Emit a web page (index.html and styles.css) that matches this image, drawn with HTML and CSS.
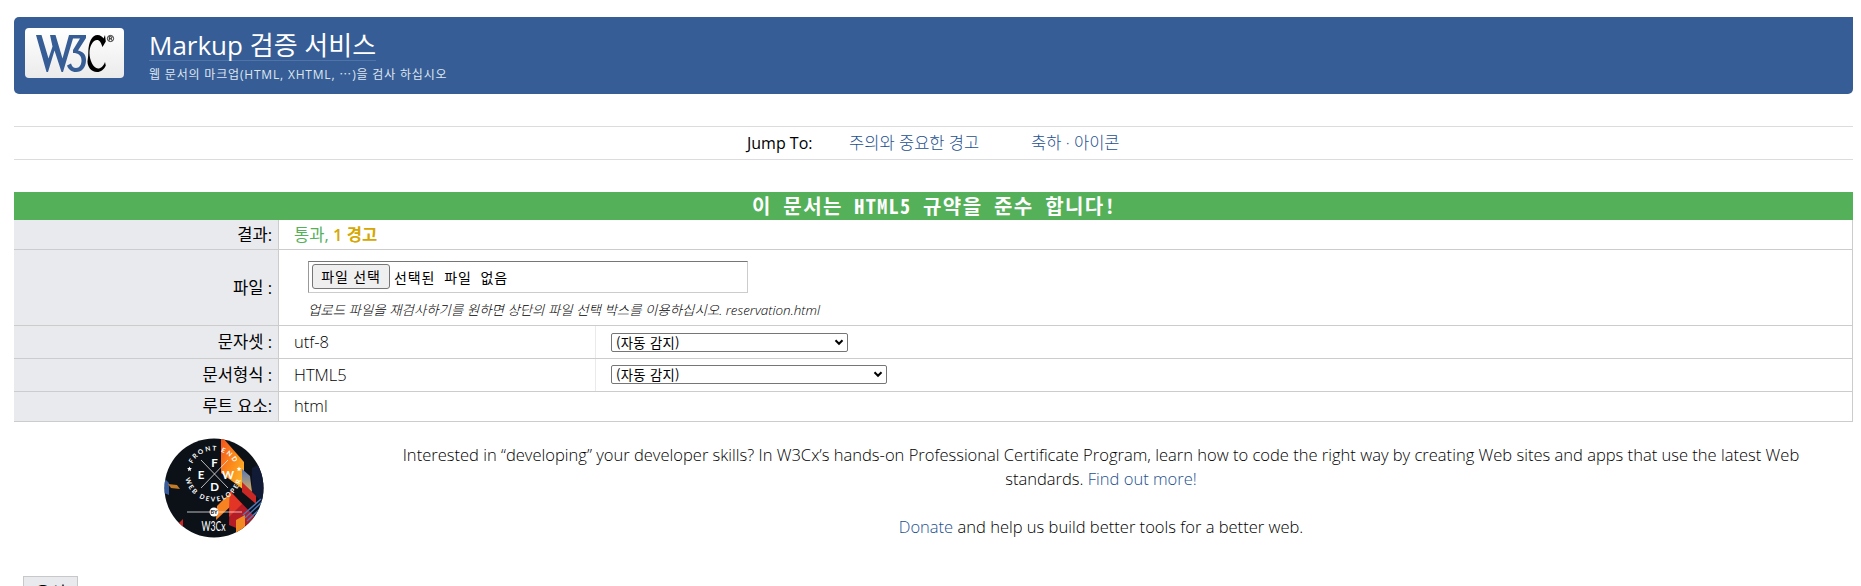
FILE: index.html
```html
<!DOCTYPE html>
<html lang="ko">
<head>
<meta charset="utf-8">
<title>Markup 검증 서비스</title>
<link rel="stylesheet" href="styles.css">
</head>
<body>
<header class="banner">
  <svg class="logo" viewBox="0 0 99 50" width="99" height="50">
    <defs><linearGradient id="plate" x1="0" y1="0" x2="0" y2="1"><stop offset="0" stop-color="#fff"/><stop offset="1" stop-color="#ebebeb"/></linearGradient></defs>
    <rect width="99" height="50" rx="4" fill="url(#plate)"/>
    <path fill="#365d95" d="M11 7h5.500l7 23.500 4-12L25 7h5.500l7 23.500L44 7h17v3l-8 12.500c5 1 8 4 8 9.500 0 7.500-4 12-10 12-4.500 0-7.500-2.500-9-6.500l4-2c1 3 2.500 4.500 5 4.500 3.500 0 5.500-3.500 5.500-7.500 0-5-3-7.500-8.500-7.500v-3l7-11.500H48L38 44h-1.500L29.500 22.500 23 44h-1.500z"/>
    <path d="M80 7l.8 6.500L77.500 19c-1.500-4.500-3-7-5.500-7-4 0-7.500 6-7.500 13s4 15.500 8.500 15.500c3 0 5.500-2.500 7-6.500l.8 3.500C79 41.500 76 44 72 44c-6 0-9.500-5.500-9.500-10.500 0 0 .8-5 .8-9.500C63.500 14 67 7 72.500 7c3 0 5 2 6 3.500z"/>
    <circle cx="85.500" cy="10.500" r="3.100" fill="none" stroke="#000" stroke-width=".8"/>
    <path d="M84.300 12.500V8.700h1.500a1 1 0 0 1 0 2h-1.500m1.500 0l1.100 1.800" fill="none" stroke="#000" stroke-width=".8"/>
  </svg>
  <div class="titles">
    <h1 class="title"><span class="title-text">Markup 검증 서비스</span></h1>
    <p class="tagline">웹 문서의 마크업(HTML, XHTML, <span class="dots">…</span>)을 검사 하십시오</p>
  </div>
</header>
<nav class="jump">
  <strong class="jump-label">Jump To:</strong>
  <a class="jump-a">주의와 중요한 경고</a>
  <a class="jump-b">축하 · 아이콘</a>
</nav>
<main>
  <h2 class="verdict"><span>이 문서는 HTML5 규약을 준수 합니다!</span></h2>
  <div class="results">
    <div class="row r-result"><div class="th">결과:</div><div class="td"><span class="pass">통과, <b class="warn">1 경고</b></span></div></div>
    <div class="row r-file"><div class="th">파일 :</div>
      <div class="td file-cell">
        <div class="file"><span class="file-btn">파일 선택</span><span class="file-none">선택된 파일 없음</span></div>
        <p class="hint">업로드 파일을 재검사하기를 원하면 상단의 파일 선택 박스를 이용하십시오. reservation.html</p>
      </div></div>
    <div class="row r-mid"><div class="th">문자셋 :</div><div class="td half">utf-8</div>
      <div class="td"><div class="select s1"><span>(자동 감지)</span><svg width="10" height="7" viewBox="0 0 10 7"><path d="M1.500 1.200L5 4.800 8.500 1.200" fill="none" stroke="#000" stroke-width="2"/></svg></div></div></div>
    <div class="row r-mid"><div class="th">문서형식 :</div><div class="td half">HTML5</div>
      <div class="td up"><div class="select s2"><span>(자동 감지)</span><svg width="10" height="7" viewBox="0 0 10 7"><path d="M1.500 1.200L5 4.800 8.500 1.200" fill="none" stroke="#000" stroke-width="2"/></svg></div></div></div>
    <div class="row r-root"><div class="th up">루트 요소:</div><div class="td up">html</div></div>
  </div>
  <section class="promo">
    <svg class="badge" viewBox="0 0 100 100" width="100" height="100">
      <defs>
        <clipPath id="disc"><circle cx="50" cy="50" r="49.500"/></clipPath>
        <linearGradient id="flame" x1="0" y1="0" x2="1" y2="1"><stop offset="0" stop-color="#f4511e"/><stop offset=".5" stop-color="#fb8c1b"/><stop offset="1" stop-color="#fdc02f"/></linearGradient>
        <linearGradient id="haze" x1="0" y1="0" x2="0" y2="1"><stop offset="0" stop-color="#5876b5"/><stop offset="1" stop-color="#d8b060"/></linearGradient>
        <path id="top" d="M26 36A23.500 23.500 0 0 1 73 36"/>
        <path id="bottom" d="M21 35A28.500 28.500 0 0 0 78 35"/>
      </defs>
      <g clip-path="url(#disc)">
        <rect width="100" height="100" fill="#0c1118"/>
        <path d="M57 0h2l21 24v28L57 35z" fill="url(#flame)"/>
        <path d="M78 31l8 7 2 16-10-9z" fill="url(#haze)"/>
        <path d="M88 30l12-6v40l-12-8z" fill="#111b35"/>
        <path d="M78 44l14 14v8L78 54z" fill="#c92824"/>
        <path d="M53 68l15-15v14L52 82z" fill="#f78222"/>
        <path d="M66 53l25 26-14 13-12-5z" fill="#b51c25"/>
        <path d="M66 53l12 13-13 13z" fill="#e33526"/>
        <path d="M72 82l9-5v13l-9 6z" fill="#f28a24"/>
        <path d="M79 77l18-16M81 80l17-16M83 83l16-15" stroke="#4a78c0" stroke-width="1.400"/>
        <path d="M0 40l5 5v12l-5-2z" fill="#365b9f"/>
        <path d="M4 46l9 1 3 4-9-1z" fill="#c17a25"/>
        <path d="M14 86l5-5v11z" fill="#c92824"/>
        <path d="M37 22l27 28M64 22L37 50M23 74h23M55 74h23" stroke="#e8e8e8" stroke-width=".8"/>
        <circle cx="50" cy="74" r="4.500" fill="#fff"/>
      </g>
      <path class="star" d="M25.500 28.500l.7 1.600 1.700.2-1.300 1.200.4 1.700-1.500-.9-1.500.9.4-1.700-1.300-1.200 1.700-.2zM75 28.500l.7 1.600 1.700.2-1.300 1.200.4 1.700-1.500-.9-1.500.9.4-1.700-1.300-1.200 1.700-.2z"/>
      <g class="badge-text">
        <text x="50.500" y="28.600" class="big">F</text><text x="37" y="40.500" class="big">E</text>
        <text x="64" y="40.500" class="big">W</text><text x="50.500" y="52.800" class="big">D</text>
        <text class="arc"><textPath href="#top" startOffset="50%">FRONT END</textPath></text>
        <text class="arc low"><textPath href="#bottom" startOffset="50%">WEB DEVELOPER</textPath></text>
        <text x="50" y="76" class="by">BY</text>
        <text x="49.500" y="92.500" class="w3cx" textLength="24" lengthAdjust="spacingAndGlyphs">W3Cx</text>
      </g>
    </svg>
    <div class="copy">
      <p>Interested in “developing” your developer skills? In W3Cx’s hands-on Professional Certificate Program, learn how to code the right way by creating Web sites and apps that use the latest Web</p>
      <p>standards. <a>Find out more!</a></p>
      <p class="donate"><a>Donate</a> and help us build better tools for a better web.</p>
    </div>
  </section>
  <div class="back">옵션</div>
</main>
</body>
</html>
```
FILE: styles.css
```css
* { box-sizing: border-box; }
html, body { height: 586px; overflow: hidden; }
body { margin: 0; padding: 17px 8px 0 14px; background: #fff; color: #000; font: 300 16.55px/24px "Open Sans", "Noto Sans CJK KR", sans-serif; }
h1, h2, p { margin: 0; font-weight: inherit; }
a { color: #23508f; }
.banner { display: flex; height: 77px; padding: 11px; background: #365d95; border-radius: 5px 0 5px 5px; color: #fff; }
.logo { flex: none; }
.titles { margin-left: 25px; white-space: nowrap; }
.title { height: 33px; font-size: 26px; line-height: 34px; font-weight: 400; }
.title-text { display: inline-block; height: 33px; border-bottom: 1px solid #4f74a8; }
.tagline { font-size: 12px; line-height: 18px; margin-top: 5px; letter-spacing: .82px; color: #dfe6f0; font-weight: 400; }
.dots { font-family: "Noto Sans CJK KR", sans-serif; line-height: 1; }
.jump { display: flex; height: 34px; margin-top: 32px; padding-left: 733px; border: solid #dcdcdf; border-width: 1px 0; line-height: 32px; white-space: nowrap; }
.jump-label { width: 102px; font-size: 16px; font-weight: 400; }
.jump-a { width: 182px; }
.verdict { margin-top: 32px; height: 28px; padding-left: 738px; background: #55b05a; color: #fff; font: 700 20px/28px "Noto Sans Mono CJK KR", "Noto Sans CJK KR", sans-serif; letter-spacing: 1.45px; white-space: nowrap; }
.results { border-right: 1px solid #ccc; }
.row { display: flex; border-bottom: 1px solid #ccc; }
.r-result { height: 30px; }
.r-file { height: 76px; }
.r-mid { height: 33px; }
.r-root { height: 30px; }
.th { display: flex; flex: none; align-items: center; justify-content: flex-end; width: 265px; padding-right: 6px; background: #e9eaee; border-right: 1px solid #ccc; font-weight: 400; }
.td { display: flex; align-items: center; padding-left: 15px; }
.up { padding-bottom: 2px; }
.half { flex: none; width: 317px; border-right: 1px solid #e9eaee; }
.pass { color: #55b05a; font-weight: 400; }
.warn { color: #d6a700; font-weight: 600; }
.td.file-cell { display: block; padding: 11px 0 0 29px; }
.file { display: flex; width: 440px; height: 32px; padding: 2px 3px; border: 1px solid #ccc; border-top-color: #767676; border-left-color: #999; font: 400 14px/25px "Noto Sans CJK KR", sans-serif; }
.file-btn { width: 78px; height: 25px; border: 1px solid #767676; border-radius: 3px; background: #efefef; text-align: center; line-height: 23px; letter-spacing: .8px; }
.file-none { margin-left: 4px; line-height: 27px; word-spacing: 4px; letter-spacing: .9px; }
.hint { font-style: italic; font-size: 13.45px; line-height: 20px; margin-top: 7px; white-space: nowrap; }
.select { display: flex; flex: none; align-items: center; justify-content: space-between; height: 19px; padding: 0 4px; border: 1px solid #767676; border-radius: 2px; font: 400 13.3px/17px "Noto Sans CJK KR", sans-serif; letter-spacing: .3px; }
.select svg { margin-right: -1px; }
.s1 { width: 237px; }
.s2 { width: 276px; }
.promo { display: flex; padding: 16px 0 0 150px; }
.badge { flex: none; }
.badge-text { fill: #fff; font-family: Lato, sans-serif; font-weight: 700; text-anchor: middle; }
.big { font-size: 11.5px; }
.arc { font-size: 6.5px; letter-spacing: 1.7px; }
.low { letter-spacing: 1.9px; }
.star { fill: #fff; }
.by { font-size: 5.5px; fill: #111; }
.w3cx { font-size: 13px; font-weight: 400; }
.copy { flex: none; width: 1674px; padding-top: 5px; text-align: center; white-space: nowrap; }
.donate { margin-top: 24px; }
.back { width: 55px; height: 40px; margin: 37px 0 0 9px; border: 1px solid #c8c8c8; background: #e9eaee; text-align: center; line-height: 24px; padding-top: 4px; font-weight: 400; }
```
